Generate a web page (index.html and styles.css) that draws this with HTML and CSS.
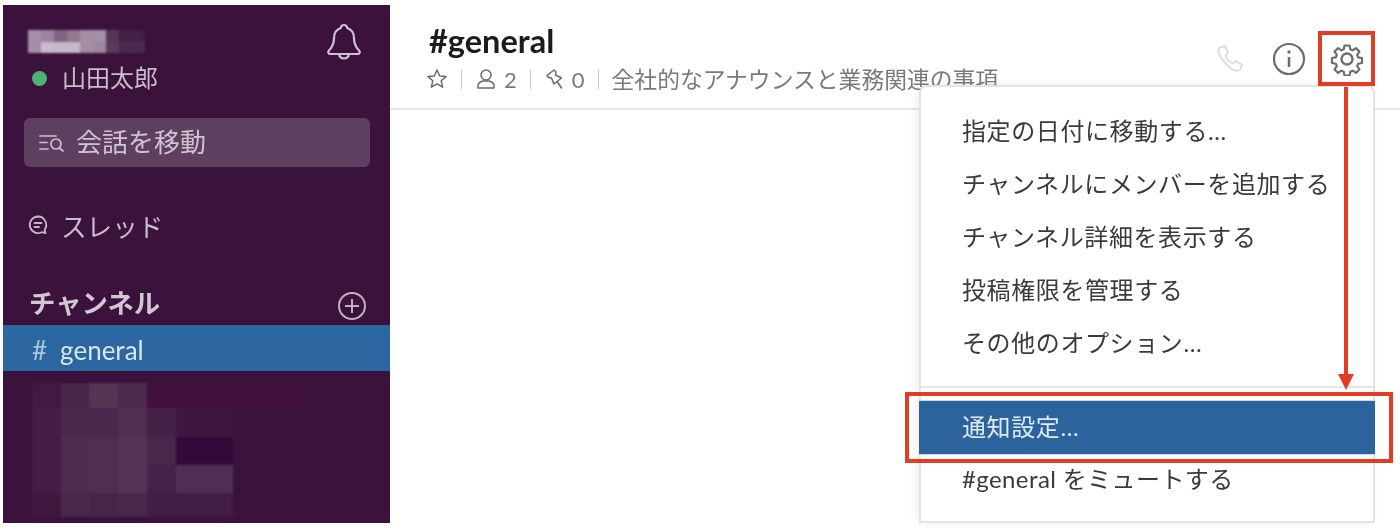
FILE: index.html
```html
<!DOCTYPE html>
<html lang="ja">
<head>
<meta charset="utf-8">
<title>Slack</title>
<link rel="stylesheet" href="styles.css">
</head>
<body>
<div class="app">
  <aside class="sidebar">
    <div class="team">
      <div class="team-info">
        <svg class="mosaic-top" width="117" height="23" viewBox="0 0 117 23">
          <g shape-rendering="crispEdges">
            <rect x="0" y="0" width="13" height="12" fill="#a58fa8"/><rect x="13" y="0" width="13" height="12" fill="#9a84a0"/><rect x="26" y="0" width="13" height="12" fill="#806583"/><rect x="39" y="0" width="13" height="12" fill="#93788f"/><rect x="52" y="0" width="13" height="12" fill="#a58ea5"/><rect x="65" y="0" width="13" height="12" fill="#a490a8"/><rect x="78" y="0" width="13" height="12" fill="#573558"/><rect x="91" y="0" width="13" height="12" fill="#452048"/><rect x="104" y="0" width="13" height="12" fill="#41204a"/>
            <rect x="0" y="12" width="13" height="11" fill="#a58fa8"/><rect x="13" y="12" width="13" height="11" fill="#c9bccb"/><rect x="26" y="12" width="13" height="11" fill="#c5b8c8"/><rect x="39" y="12" width="13" height="11" fill="#c5b8c8"/><rect x="52" y="12" width="13" height="11" fill="#a48ea6"/><rect x="65" y="12" width="13" height="11" fill="#9e88a0"/><rect x="78" y="12" width="13" height="11" fill="#5c3a5c"/><rect x="91" y="12" width="13" height="11" fill="#4a2a4c"/><rect x="104" y="12" width="13" height="11" fill="#4a2a4c"/>
          </g>
        </svg>
        <div class="user"><span class="presence"></span><span class="user-name">山田太郎</span></div>
      </div>
      <svg class="bell" width="36" height="38" viewBox="0 0 36 38" fill="none" stroke="#cfbfd2" stroke-width="2.200" stroke-linejoin="round">
        <path d="M18 2c-1.500 0-3 1-3.300 3-4 1.500-6.700 5-6.700 10 0 6-1.500 9-5 12.500-1.500 1.500-.8 3.500 1.500 3.500h27c2.300 0 3-2 1.500-3.500-3.500-3.500-5-6.500-5-12.500 0-5-2.700-8.500-6.700-10-.3-2-1.800-3-3.300-3z"/>
        <path d="M13 31c.5 3 2.500 4.500 5 4.500s4.500-1.500 5-4.500"/>
      </svg>
    </div>
    <div class="jump">
      <svg class="jump-icon" width="28" height="20" viewBox="0 0 28 20" fill="none" stroke="#cdbfcd" stroke-width="1.700" stroke-linecap="round">
        <path d="M2 3h16M2 9.500h7M2 16h8"/>
        <circle cx="18" cy="11" r="5"/>
        <path d="M21.500 15l3.500 3"/>
      </svg>
      <span class="jump-label">会話を移動</span>
    </div>
    <div class="threads">
      <svg class="thread-icon" width="22" height="22" viewBox="0 0 22 22" fill="none" stroke="#c4b5c4" stroke-width="1.800" stroke-linecap="round" stroke-linejoin="round">
        <path d="M11 2.500a8.300 8.300 0 1 0 3.800 15.700l3.700 1-.9-3.500A8.300 8.300 0 0 0 11 2.500z"/>
        <path d="M7.500 9h7M7.500 13h4.500"/>
      </svg>
      <span>スレッド</span>
    </div>
    <div class="channels-head">
      <span class="channels-title">チャンネル</span>
      <svg class="add" width="30" height="30" viewBox="0 0 30 30" fill="none" stroke="#c4aec6" stroke-width="2">
        <circle cx="15" cy="15" r="13"/>
        <path d="M15 8v14M8 15h14"/>
      </svg>
    </div>
    <div class="channel"><span class="hash">#</span><span>general</span></div>
    <svg class="mosaic-bottom" width="270" height="134" viewBox="0 0 270 134">
      <g shape-rendering="crispEdges">
        <rect x="0" y="0" width="29" height="25" fill="#411a43"/><rect x="29" y="0" width="28" height="25" fill="#482549"/><rect x="57" y="0" width="29" height="25" fill="#563554"/><rect x="86" y="0" width="29" height="25" fill="#4c2a4e"/><rect x="115" y="0" width="155" height="25" fill="#430f3c"/>
        <rect x="0" y="25" width="29" height="29" fill="#431d45"/><rect x="29" y="25" width="28" height="29" fill="#4a274c"/><rect x="57" y="25" width="29" height="29" fill="#4a274c"/><rect x="86" y="25" width="29" height="29" fill="#4f2e51"/><rect x="115" y="25" width="29" height="29" fill="#452148"/><rect x="144" y="25" width="57" height="29" fill="#3e1640"/>
        <rect x="0" y="54" width="29" height="28" fill="#431d45"/><rect x="29" y="54" width="28" height="28" fill="#4e2c50"/><rect x="57" y="54" width="29" height="28" fill="#4f2e52"/><rect x="86" y="54" width="29" height="28" fill="#553457"/><rect x="115" y="54" width="29" height="28" fill="#4a284c"/><rect x="144" y="54" width="57" height="28" fill="#33093a"/>
        <rect x="0" y="82" width="29" height="28" fill="#431d45"/><rect x="29" y="82" width="28" height="28" fill="#4e2c50"/><rect x="57" y="82" width="29" height="28" fill="#4f2e52"/><rect x="86" y="82" width="29" height="28" fill="#553457"/><rect x="115" y="82" width="29" height="28" fill="#45224a"/><rect x="144" y="82" width="57" height="28" fill="#502e54"/>
        <rect x="0" y="110" width="29" height="24" fill="#3f1840"/><rect x="29" y="110" width="28" height="24" fill="#4a274c"/><rect x="57" y="110" width="29" height="24" fill="#472449"/><rect x="86" y="110" width="29" height="24" fill="#4a274c"/><rect x="115" y="110" width="86" height="24" fill="#421d45"/>
      </g>
    </svg>
  </aside>

  <main class="main">
    <header class="header">
      <div class="header-info">
        <h1 class="title">#general</h1>
        <div class="meta">
          <svg class="meta-star" width="22" height="22" viewBox="0 0 22 22" fill="none" stroke="#6a6a6a" stroke-width="1.500" stroke-linejoin="round"><path d="M11 2l2.700 6 6.300.6-4.800 4.200 1.500 6.400L11 15.800l-5.700 3.400 1.500-6.400L2 8.600 8.300 8z"/></svg>
          <span class="sep"></span>
          <svg class="meta-icon" width="20" height="22" viewBox="0 0 20 22" fill="none" stroke="#6a6a6a" stroke-width="1.500"><circle cx="10" cy="7" r="5"/><path d="M2 20c-.5-3 1-6 4.500-7h7c3.500 1 5 4 4.500 7z" stroke-linejoin="round"/></svg>
          <span class="count">2</span>
          <span class="sep"></span>
          <svg class="meta-icon meta-pin" width="20" height="22" viewBox="0 0 20 22" fill="none" stroke="#6a6a6a" stroke-width="1.500" stroke-linejoin="round"><path d="M2 7.500L9 2l2 2-.5 3 6 3L9 16 6.500 10l-3-.5z"/><path d="M12.500 14l4 6" stroke-linecap="round"/></svg>
          <span class="count">0</span>
          <span class="sep"></span>
          <span class="desc">全社的なアナウンスと業務関連の事項</span>
        </div>
      </div>
      <div class="tools">
        <svg class="phone" width="30" height="30" viewBox="0 0 30 30" fill="none" stroke="#dedede" stroke-width="2" stroke-linejoin="round"><path d="M4 3.500l5-1.500 3 7-2.500 2.500c1 3 4 6.500 7.500 8l2.500-2.500 6.500 3.500-1.500 4.500c-1 1.500-3 2-5 1.500C12 24 4.500 15 2.500 8c-.3-2 .3-3.500 1.500-4.500z"/></svg>
        <svg class="info" width="34" height="34" viewBox="0 0 34 34" fill="none" stroke="#6d6d6d" stroke-width="2.200"><circle cx="17" cy="17" r="15"/><path d="M17 15v10" stroke-width="2.600"/><circle cx="17" cy="10" r="1.700" fill="#6d6d6d" stroke="none"/></svg>
        <svg class="gear" width="34" height="34" viewBox="0 0 34 34" fill="none" stroke="#6d6d6d" stroke-width="2.400" stroke-linejoin="round"><path d="M14.200 2h5.600l.8 4.300 2.700 1.100 3.600-2.500 3.900 3.900-2.500 3.600 1.100 2.800 4.300.7v5.600l-4.300.8-1.100 2.700 2.500 3.600-3.900 3.900-3.600-2.500-2.700 1.100-.8 4.300h-5.600l-.8-4.300-2.700-1.100-3.600 2.500-3.900-3.900 2.500-3.600-1.100-2.700-4.300-.8v-5.600l4.300-.7 1.100-2.800-2.500-3.600 3.900-3.900 3.600 2.500 2.700-1.100z" transform="translate(1.700 1.700) scale(.9)"/><circle cx="17" cy="17" r="5.500"/></svg>
      </div>
    </header>
  </main>

  <nav class="menu">
    <ul class="menu-group">
      <li class="menu-item">指定の日付に移動する...</li>
      <li class="menu-item">チャンネルにメンバーを追加する</li>
      <li class="menu-item">チャンネル詳細を表示する</li>
      <li class="menu-item">投稿権限を管理する</li>
      <li class="menu-item">その他のオプション...</li>
    </ul>
    <ul class="menu-group menu-group-last">
      <li class="menu-item menu-item-active">通知設定...</li>
      <li class="menu-item menu-item-mute">#general をミュートする</li>
    </ul>
  </nav>

  <div class="mark mark-gear"></div>
  <div class="mark-arrow"></div>
  <div class="mark mark-item"></div>
</div>
</body>
</html>
```

FILE: styles.css
```css
* { box-sizing: border-box; }
html, body { margin: 0; padding: 0; background: #fff; }
body { font-family: "Lato", "Noto Sans CJK JP", sans-serif; overflow: hidden; }
ul { list-style: none; margin: 0; padding: 0; }

.app { position: relative; display: flex; width: 1400px; height: 530px; }

.sidebar {
  flex: none; display: flex; flex-direction: column;
  width: 387px; height: 518px; margin: 5px 0 0 3px;
  background: #3a123c; color: #cbbccb; overflow: hidden;
  filter: blur(.5px);
}
.team { display: flex; justify-content: space-between; padding: 25px 28px 0 25px; height: 113px; }
.mosaic-top { display: block; filter: blur(1px); }
.user { display: flex; align-items: center; margin-top: 2px; height: 46px; }
.presence { width: 15px; height: 15px; border-radius: 50%; background: #4fb277; margin: 0 15px 0 4px; }
.user-name { font-size: 24px; line-height: 1; }
.bell { margin-top: -7px; }

.jump {
  display: flex; align-items: center; height: 49px; margin: 0 20px 0 21px;
  padding-left: 14px; background: #5f3f60; border-radius: 6px; font-size: 26px; color: #d0c4d0;
}
.jump-icon { margin-right: 10px; }
.jump-label { padding-bottom: 4px; }

.threads { display: flex; align-items: center; margin: 40px 0 0 24px; height: 36px; font-size: 25.600px; color: #cbbccb; }
.thread-icon { margin-right: 12px; }

.channels-head { display: flex; justify-content: space-between; align-items: center; margin-top: 40px; height: 42px; padding: 0 23px 0 26px; }
.channels-title { font-size: 26.400px; font-weight: 700; color: #d3c6d3; margin-bottom: 6px; }
.add { margin-top: 4px; }
.channel { display: flex; align-items: center; height: 46px; padding: 3px 0 0 29px; background: #2b66a1; color: #d6e6f2; font-size: 26px; }
.hash { margin-right: 13px; font-size: 26px; color: #a9c5de; }
.mosaic-bottom { display: block; margin: 12px 0 0 29px; flex: none; filter: blur(1px); }

.main { flex: 1; min-width: 0; }
.header { display: flex; justify-content: space-between; height: 110px; border-bottom: 2px solid #e6e6e6; padding: 0 26px 0 38px; filter: blur(.5px); }
.title { margin: 23px 0 0 1px; font-size: 32.500px; line-height: 36px; font-weight: 700; color: #1d1c1d; }
.meta { display: flex; align-items: center; height: 26px; margin-top: 7px; font-size: 22.800px; color: #7a7a7a; white-space: nowrap; }
.meta-star { flex: none; margin-left: -2px; }
.meta-icon { flex: none; margin-right: 8px; }
.meta-pin { margin-right: 7px; }
.sep { width: 1px; height: 20px; background: #c8c8c8; margin: 0 14px 0 13px; }
.count { font-size: 22px; }
.desc { line-height: 1; margin-left: -1px; }

.tools { display: flex; align-items: center; height: 54px; margin-top: 32px; }
.phone { margin-right: 26px; }
.info { margin-right: 24px; }
.gear { margin-right: 10px; }

.menu {
  position: absolute; left: 919px; top: 85px; width: 456px; height: 438px;
  background: #fff; border: 2px solid #e3e3e3; border-radius: 8px 8px 0 0;
  box-shadow: -3px 0 8px rgba(0, 0, 0, .06);
  padding-top: 18px; font-size: 24px; color: #3a3a3a;
}
.menu-group { padding-bottom: 16px; border-bottom: 2px solid #e6e6e6; }
.menu-group-last { padding: 13px 0 0; border-bottom: 0; }
.menu-item { height: 53px; line-height: 52px; padding-left: 41px; letter-spacing: .6px; white-space: nowrap; filter: blur(.5px); }
.menu-item-active { margin: 0 -2px; padding-left: 43px; background: #2d639c; color: #dcecf6; box-shadow: 0 -1px 0 #bfe3ea, 0 1px 0 #bfe3ea; }
.menu-item-mute { letter-spacing: .4px; line-height: 50px; }

.mark { position: absolute; border: 4px solid #e03d24; }
.mark-gear { left: 1318px; top: 31px; width: 57px; height: 55px; }
.mark-item { left: 905px; top: 392px; width: 488px; height: 71px; }
.mark-arrow { position: absolute; left: 1344px; top: 87px; width: 4px; height: 288px; background: #e03d24; }
.mark-arrow::after {
  content: ""; position: absolute; left: -6px; top: 287px;
  border-left: 8px solid transparent; border-right: 8px solid transparent; border-top: 16px solid #e03d24;
}
```
